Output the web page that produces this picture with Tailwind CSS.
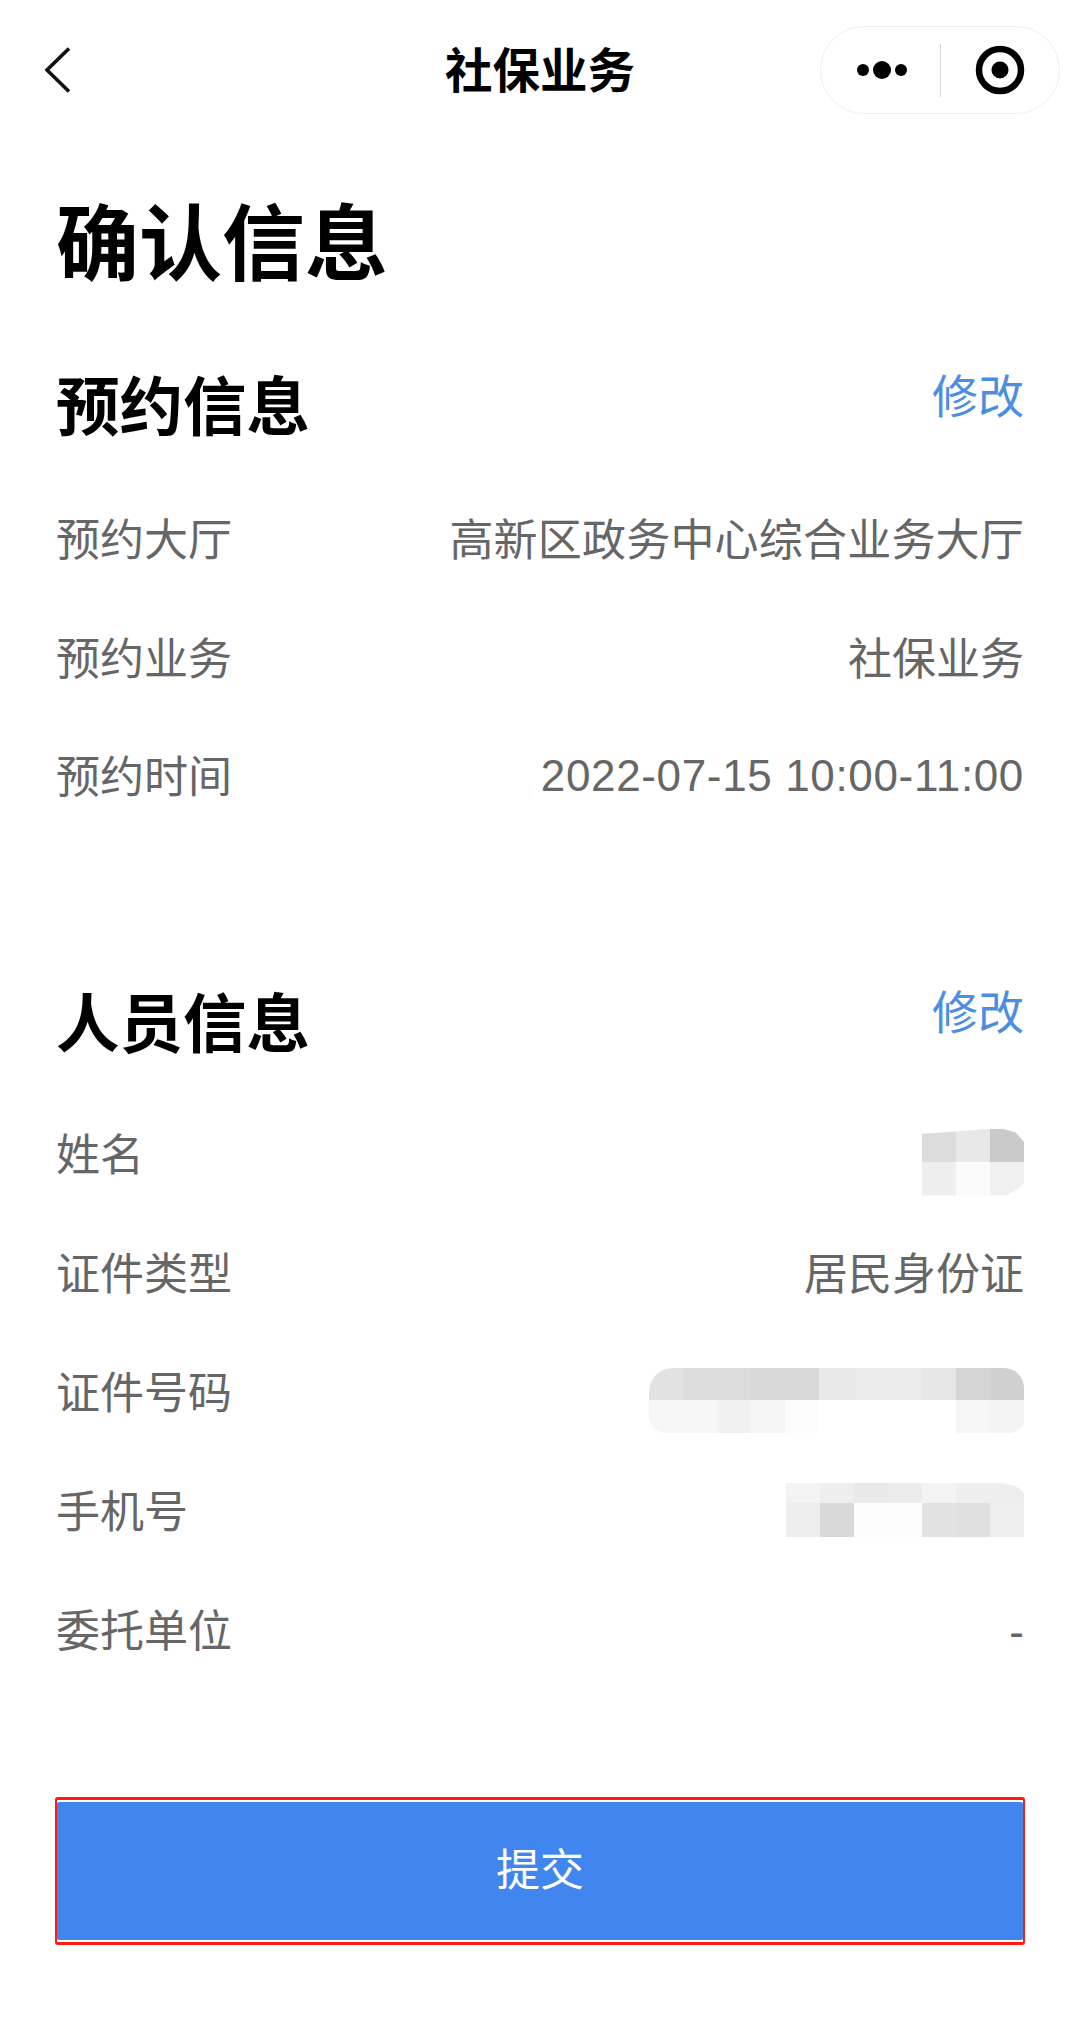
<!doctype html>
<html lang="zh-CN">
<head>
<meta charset="utf-8">
<script src="https://cdn.jsdelivr.net/npm/@tailwindcss/browser@4"></script>
</head>
<body class="bg-white font-['Liberation_Sans','Noto_Sans_CJK_SC',sans-serif]">
<div class="w-[1080px] h-[2036px] flex flex-col overflow-hidden">
  <header class="relative h-[140px] shrink-0 flex items-center justify-center pt-[4px]">
    <svg class="absolute left-[44px] top-[47px]" width="28" height="46" viewBox="0 0 28 46" fill="none"><path d="M25 1.5 3 23l22 21.5" stroke="#111" stroke-width="3.6"/></svg>
    <h1 class="text-[47.5px] leading-none font-bold text-black">社保业务</h1>
    <div class="absolute left-[820px] top-[26px] w-[240px] h-[88px] rounded-full border border-[#efefef] flex items-center">
      <div class="w-[119px] flex items-center justify-center gap-[4px] pl-[3px]">
        <span class="w-[12px] h-[12px] rounded-full bg-black"></span>
        <span class="w-[18px] h-[18px] rounded-full bg-black"></span>
        <span class="w-[12px] h-[12px] rounded-full bg-black"></span>
      </div>
      <div class="w-px h-[53px] bg-[#d4d4d4]"></div>
      <div class="flex-1 flex items-center justify-center">
        <svg width="50" height="50" viewBox="0 0 50 50" fill="none"><circle cx="25" cy="25" r="21" stroke="#000" stroke-width="6.5"/><circle cx="25" cy="25" r="8.5" fill="#000"/></svg>
      </div>
    </div>
  </header>

  <main class="px-[56px] flex-1 flex flex-col">
    <h2 class="h-[96px] mt-[58px] text-[83px] leading-[96px] font-bold text-black">确认信息</h2>

    <section class="mt-[76px]">
      <div class="flex justify-between items-start h-[76px]">
        <h3 class="text-[63.5px] leading-[76px] font-bold text-black">预约信息</h3>
        <span class="text-[46px] leading-[56px] text-[#4b8ee2] -mt-[1px]">修改</span>
      </div>
      <dl class="mt-[67px] flex flex-col gap-[62.5px] text-[44px] leading-[56px] text-[#666]">
        <div class="flex justify-between"><dt>预约大厅</dt><dd class="tracking-[0.2px]">高新区政务中心综合业务大厅</dd></div>
        <div class="flex justify-between"><dt>预约业务</dt><dd>社保业务</dd></div>
        <div class="flex justify-between"><dt>预约时间</dt><dd class="tracking-[0.65px] -translate-y-[2px]">2022-07-15 10:00-11:00</dd></div>
      </dl>
    </section>

    <section class="mt-[181px]">
      <div class="flex justify-between items-start h-[76px]">
        <h3 class="text-[63.5px] leading-[76px] font-bold text-black">人员信息</h3>
        <span class="text-[46px] leading-[56px] text-[#4b8ee2] -mt-[2px]">修改</span>
      </div>
      <dl class="mt-[65px] flex flex-col gap-[63px] text-[44px] leading-[56px] text-[#666]">
        <div class="flex justify-between items-center h-[56px]"><dt>姓名</dt>
          <dd class="grid grid-cols-[repeat(3,34px)] grid-rows-[33px_34px] w-[102px] translate-y-[6px] [clip-path:polygon(0_8%,30%_5%,60%_1%,78%_0,92%_6%,100%_20%,100%_82%,92%_92%,82%_100%,0_100%)]">
            <span class="bg-[#dcdcdc]"></span><span class="bg-[#e8e8e8]"></span><span class="bg-[#cacaca]"></span>
            <span class="bg-[#eeeeee]"></span><span class="bg-[#fbfbfb]"></span><span class="bg-[#f0f0f0]"></span>
          </dd>
        </div>
        <div class="flex justify-between"><dt>证件类型</dt><dd>居民身份证</dd></div>
        <div class="flex justify-between items-center h-[56px]"><dt>证件号码</dt>
          <dd class="grid grid-cols-[repeat(11,34.1px)] grid-rows-[32px_33px] w-[375px] translate-y-[6px] [border-radius:24px_20px_14px_18px] overflow-hidden">
            <span class="bg-[#e2e2e2]"></span><span class="bg-[#dcdcdc]"></span><span class="bg-[#dcdcdc]"></span><span class="bg-[#d9d9d9]"></span><span class="bg-[#d8d8d8]"></span><span class="bg-[#e9e9e9]"></span><span class="bg-[#eaeaea]"></span><span class="bg-[#eaeaea]"></span><span class="bg-[#e6e6e6]"></span><span class="bg-[#d5d5d5]"></span><span class="bg-[#d0d0d0]"></span>
            <span class="bg-[#f6f6f6]"></span><span class="bg-[#f7f7f7]"></span><span class="bg-[#f1f1f1]"></span><span class="bg-[#f5f5f5]"></span><span class="bg-[#fcfcfc]"></span><span class="bg-white"></span><span class="bg-white"></span><span class="bg-white"></span><span class="bg-white"></span><span class="bg-[#f6f6f6]"></span><span class="bg-[#f4f4f4]"></span>
          </dd>
        </div>
        <div class="flex justify-between items-center h-[56px]"><dt>手机号</dt>
          <dd class="grid grid-cols-[repeat(7,34px)] grid-rows-[20px_34px] w-[238px] -translate-y-[3px] rounded-tr-[28px_12px] overflow-hidden">
            <span class="bg-[#f3f3f3]"></span><span class="bg-[#eeeeee]"></span><span class="bg-[#e9e9e9]"></span><span class="bg-[#ebebeb]"></span><span class="bg-[#f3f3f3]"></span><span class="bg-[#eeeeee]"></span><span class="bg-[#eeeeee]"></span>
            <span class="bg-[#eeeeee]"></span><span class="bg-[#d9d9d9]"></span><span class="bg-[#fcfcfc]"></span><span class="bg-[#fcfcfc]"></span><span class="bg-[#e2e2e2]"></span><span class="bg-[#e0e0e0]"></span><span class="bg-[#efefef]"></span>
          </dd>
        </div>
        <div class="flex justify-between"><dt>委托单位</dt><dd>-</dd></div>
      </dl>
    </section>

    <div class="mt-[137px] -mx-[1px] h-[148px] border-y-[3px] border-x-2 border-[#ff1a12] rounded-[3px] py-[2px]">
      <button class="block w-full h-full bg-[#4086ee] rounded-[2px] text-white text-[44px] leading-none">提交</button>
    </div>
  </main>
</div>
</body>
</html>
